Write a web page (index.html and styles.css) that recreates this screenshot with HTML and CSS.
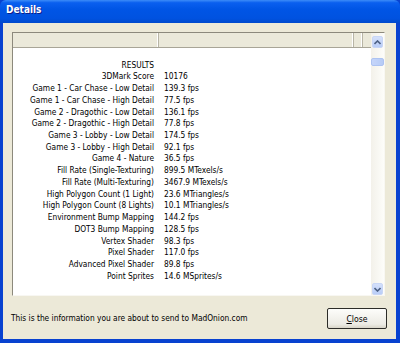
FILE: index.html
```html
<!DOCTYPE html>
<html>
<head>
  <meta charset="UTF-8">
  <title>Details</title>
  <link rel="stylesheet" href="styles.css">
</head>
<body>
  <div class="window">
    <div class="titlebar"><span class="title">Details</span></div>
    <div class="dialog">
      <div class="list">
        <div class="list-main">
          <div class="header">
            <div class="col c1"></div>
            <div class="col c2"></div>
            <div class="col c3"></div>
            <div class="col c4"></div>
          </div>
          <div class="rows">
            <div class="row"><span class="label"></span><span class="value"></span></div>
            <div class="row"><span class="label">RESULTS</span><span class="value"></span></div>
            <div class="row"><span class="label">3DMark Score</span><span class="value">10176</span></div>
            <div class="row"><span class="label">Game 1 - Car Chase - Low Detail</span><span class="value">139.3 fps</span></div>
            <div class="row"><span class="label">Game 1 - Car Chase - High Detail</span><span class="value">77.5 fps</span></div>
            <div class="row"><span class="label">Game 2 - Dragothic - Low Detail</span><span class="value">136.1 fps</span></div>
            <div class="row"><span class="label">Game 2 - Dragothic - High Detail</span><span class="value">77.8 fps</span></div>
            <div class="row"><span class="label">Game 3 - Lobby - Low Detail</span><span class="value">174.5 fps</span></div>
            <div class="row"><span class="label">Game 3 - Lobby - High Detail</span><span class="value">92.1 fps</span></div>
            <div class="row"><span class="label">Game 4 - Nature</span><span class="value">36.5 fps</span></div>
            <div class="row"><span class="label">Fill Rate (Single-Texturing)</span><span class="value">899.5 MTexels/s</span></div>
            <div class="row"><span class="label">Fill Rate (Multi-Texturing)</span><span class="value">3467.9 MTexels/s</span></div>
            <div class="row"><span class="label">High Polygon Count (1 Light)</span><span class="value">23.6 MTriangles/s</span></div>
            <div class="row"><span class="label">High Polygon Count (8 Lights)</span><span class="value">10.1 MTriangles/s</span></div>
            <div class="row"><span class="label">Environment Bump Mapping</span><span class="value">144.2 fps</span></div>
            <div class="row"><span class="label">DOT3 Bump Mapping</span><span class="value">128.5 fps</span></div>
            <div class="row"><span class="label">Vertex Shader</span><span class="value">98.3 fps</span></div>
            <div class="row"><span class="label">Pixel Shader</span><span class="value">117.0 fps</span></div>
            <div class="row"><span class="label">Advanced Pixel Shader</span><span class="value">89.8 fps</span></div>
            <div class="row"><span class="label">Point Sprites</span><span class="value">14.6 MSprites/s</span></div>
          </div>
        </div>
        <div class="scrollbar">
          <div class="sbtn">
            <svg width="7" height="5" viewBox="0 0 7 5"><path d="M0.5 4 L3.5 1 L6.5 4" fill="none" stroke="#4d6185" stroke-width="1.6"/></svg>
          </div>
          <div class="track"><div class="thumb"></div></div>
          <div class="sbtn">
            <svg width="7" height="5" viewBox="0 0 7 5"><path d="M0.5 1 L3.5 4 L6.5 1" fill="none" stroke="#4d6185" stroke-width="1.6"/></svg>
          </div>
        </div>
      </div>
      <div class="footer">
        <span class="note">This is the information you are about to send to MadOnion.com</span>
        <button class="btn"><u>C</u>lose</button>
      </div>
    </div>
  </div>
</body>
</html>
```

FILE: styles.css
```css
* {
  box-sizing: border-box;
  padding: 0;
  margin: 0;
}

body {
  width: 400px;
  height: 343px;
  overflow: hidden;
  font-family: "DejaVu Sans Condensed", "DejaVu Sans", sans-serif;
  font-stretch: condensed;
  font-size: 8.3px;
  color: #000;
}

.window {
  width: 400px;
  height: 343px;
  display: flex;
  flex-direction: column;
  background: #0842d0;
}

.titlebar {
  height: 23px;
  flex: none;
  padding: 4px 0 0 6px;
  background: linear-gradient(#3c8cf8 0%, #0a5fef 12%, #0055e5 40%, #0052e0 80%, #0049cc 100%);
  border-radius: 6px 6px 0 0;
}

.title {
  color: #fff;
  font-weight: bold;
  font-size: 10px;
  text-shadow: 1px 1px 0 #0a1e8c;
}

.dialog {
  flex: 1;
  margin: 0 4px 4px 3px;
  background: #ece9d8;
  padding: 9px 11px 0 9px;
  display: flex;
  flex-direction: column;
}

.list {
  height: 264px;
  flex: none;
  display: flex;
  border-top: 1px solid #8c897c;
  border-left: 1px solid #8c897c;
  border-right: 1px solid #f8f7f2;
  border-bottom: 1px solid #f8f7f2;
  background: #fff;
}

.list-main {
  flex: 1;
  display: flex;
  flex-direction: column;
  overflow: hidden;
}

.header {
  height: 15px;
  flex: none;
  display: flex;
  background: #ebe9da;
  border-bottom: 1px solid #a8a597;
}

.col {
  height: 100%;
  border-right: 1px solid #b8b5a6;
  box-shadow: inset -1px 0 0 #fff;
}

.c1 { width: 146px; }
.c2 { width: 195px; }
.c3 { width: 9px; }
.c4 { flex: 1; border-right: none; box-shadow: none; }

.rows {
  flex: 1;
  background: #fff;
}

.row {
  display: flex;
  height: 11.72px;
  line-height: 11.72px;
  white-space: nowrap;
}

.label {
  width: 146px;
  flex: none;
  text-align: right;
  padding-right: 5px;
}

.value {
  padding-left: 5px;
}

.scrollbar {
  width: 13px;
  flex: none;
  display: flex;
  flex-direction: column;
  background: linear-gradient(90deg, #f3f1ea, #fdfdfa);
}

.sbtn {
  height: 12px;
  margin: 3px 1px 1px 1px;
  display: flex;
  align-items: center;
  justify-content: center;
  background: linear-gradient(#d4e0fb, #b9cdf7);
  border: 1px solid #c8d6f6;
  border-radius: 2px;
}

.sbtn:last-child {
  margin: 1px 1px 0 1px;
}

.track {
  flex: 1;
  padding-top: 9px;
}

.thumb {
  height: 8px;
  background: linear-gradient(90deg, #c5d5fa, #b6cbf6);
  border: 1px solid #adc3f2;
  border-radius: 2px;
}

.footer {
  flex: 1;
  display: flex;
  align-items: flex-start;
  justify-content: space-between;
  padding-top: 12px;
  margin-left: -1px;
}

.note {
  line-height: 20px;
}

.btn {
  width: 60px;
  height: 21px;
  font-family: inherit;
  font-stretch: condensed;
  font-size: 8.6px;
  color: #000;
  background: linear-gradient(#fdfdfb, #ecebe4 80%, #d8d5c8);
  border: 1px solid #2c2c28;
  border-radius: 2px;
  margin-right: -2px;
}
```
